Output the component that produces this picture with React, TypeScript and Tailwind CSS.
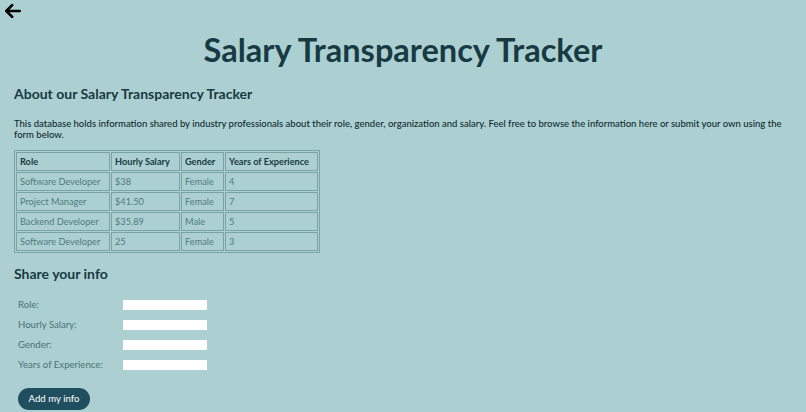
import React from "react";

const ROWS = [
  { role: "Software Developer", salary: "$38", gender: "Female", years: "4" },
  { role: "Project Manager", salary: "$41.50", gender: "Female", years: "7" },
  { role: "Backend Developer", salary: "$35.89", gender: "Male", years: "5" },
  { role: "Software Developer", salary: "25", gender: "Female", years: "3" },
];

const FIELDS = ["Role:", "Hourly Salary:", "Gender:", "Years of Experience:"];

const cell = "border border-[#7aa3a6] px-[3px] text-left";

export default function App() {
  return (
    <main
      className="relative h-[412px] w-full overflow-hidden bg-[#acd0d1] text-[#173a43]"
      style={{ fontFamily: "Lato, 'Noto Sans', sans-serif" }}
    >
      {/* Back arrow */}
      <div className="absolute left-[3px] top-[1px]">
        <svg width="20" height="20" viewBox="0 0 24 24" fill="none" stroke="#000" strokeWidth="3.2" strokeLinecap="round" strokeLinejoin="round">
          <path d="M20 12H5" />
          <path d="M11 5l-7 7 7 7" />
        </svg>
      </div>

      <h1 className="pt-[31px] text-center text-[32.5px] font-bold leading-[38px] text-[#173a43]">
        Salary Transparency Tracker
      </h1>

      <section className="px-[14px]">
        <h2 className="mt-[15px] text-[14px] font-bold leading-[20px]">
          About our Salary Transparency Tracker
        </h2>
        <p className="mt-[14px] text-[9.5px] font-medium leading-[11px] text-[#0f2a30]">
          This database holds information shared by industry professionals about their role, gender, organization and salary. Feel free to browse the information here or submit your own using the form below.
        </p>

        <table className="mt-[10px] border-separate border-spacing-[1px] border border-[#7aa3a6] text-[9.2px] leading-[11px]">
          <thead>
            <tr>
              <th className={`h-[19px] w-[94px] font-bold ${cell}`}>Role</th>
              <th className={`w-[69px] font-bold ${cell}`}>Hourly Salary</th>
              <th className={`w-[43px] font-bold ${cell}`}>Gender</th>
              <th className={`w-[93px] font-bold ${cell}`}>Years of Experience</th>
            </tr>
          </thead>
          <tbody className="text-[#4f7b80]">
            {ROWS.map((r, i) => (
              <tr key={i}>
                <td className={`h-[19px] ${cell}`}>{r.role}</td>
                <td className={cell}>{r.salary}</td>
                <td className={cell}>{r.gender}</td>
                <td className={cell}>{r.years}</td>
              </tr>
            ))}
          </tbody>
        </table>

        <h2 className="mt-[12px] text-[14px] font-bold leading-[18px]">Share your info</h2>

        <form className="mt-[17px] flex flex-col gap-[10px] pl-[4px]">
          {FIELDS.map((f) => (
            <div key={f} className="flex h-[10px] items-center">
              <label className="w-[105px] text-[9.6px] text-[#4a7277]">{f}</label>
              <input className="h-[10px] w-[84px] bg-white outline-none" />
            </div>
          ))}
          <button
            type="button"
            className="mt-[8px] h-[22px] w-[72px] rounded-full bg-[#1f4f5e] text-[9.6px] text-white"
          >
            Add my info
          </button>
        </form>
      </section>
    </main>
  );
}
